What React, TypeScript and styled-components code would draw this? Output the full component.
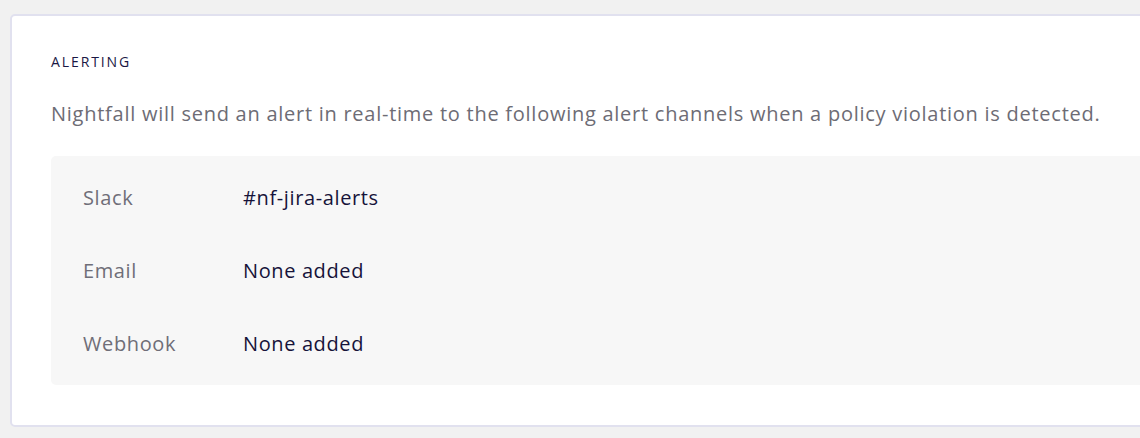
import React from "react";
import styled, { createGlobalStyle } from "styled-components";

const Global = createGlobalStyle`
  html, body {
    margin: 0;
    padding: 0;
    background: #f1f1f1;
    overflow: hidden;
    font-family: "Open Sans", "Noto Sans", sans-serif;
  }
`;

const Page = styled.div`
  padding: 14px 0 0 10px;
  width: 1400px;
`;

const Card = styled.section`
  width: 1260px;
  background: #ffffff;
  border: 2px solid #e1e1ef;
  border-radius: 5px;
  padding: 37px 0 40px 39px;
  box-sizing: border-box;
`;

const Heading = styled.h2`
  margin: 0;
  font-size: 14px;
  line-height: 18px;
  font-weight: 400;
  letter-spacing: 1.9px;
  color: #1a1744;
`;

const Description = styled.p`
  margin: 29px 0 0;
  font-size: 20px;
  line-height: 28px;
  letter-spacing: 0.74px;
  color: #6d6c75;
`;

const Channels = styled.div`
  margin-top: 28px;
  background: #f7f7f7;
  border-radius: 5px;
  padding: 5px 0 5px 32px;
`;

const Row = styled.div`
  display: grid;
  grid-template-columns: 160px 1fr;
  align-items: center;
  height: 73px;
  font-size: 20px;
  letter-spacing: 0.62px;
`;

const Label = styled.span`
  color: #6f6e78;
`;

const Value = styled.span`
  color: #16133a;
`;

const rows = [
  { label: "Slack", value: "#nf-jira-alerts" },
  { label: "Email", value: "None added" },
  { label: "Webhook", value: "None added" },
];

export default function App() {
  return (
    <>
      <Global />
      <Page>
        <Card>
          <Heading>ALERTING</Heading>
          <Description>
            Nightfall will send an alert in real-time to the following alert channels when a policy violation is detected.
          </Description>
          <Channels>
            {rows.map((r) => (
              <Row key={r.label}>
                <Label>{r.label}</Label>
                <Value>{r.value}</Value>
              </Row>
            ))}
          </Channels>
        </Card>
      </Page>
    </>
  );
}
